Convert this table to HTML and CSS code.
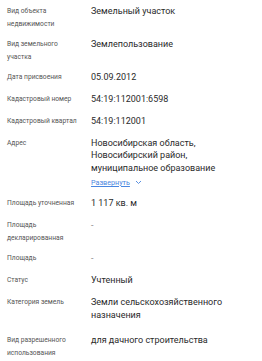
FILE: index.html
```html
<!DOCTYPE html>
<html lang="ru">
<head>
<meta charset="utf-8">
<link rel="stylesheet" href="styles.css">
</head>
<body>
<div class="list">
  <div class="row"><div class="label">Вид объекта<br>недвижимости</div><div class="value">Земельный участок</div></div>
  <div class="row"><div class="label">Вид земельного<br>участка</div><div class="value">Землепользование</div></div>
  <div class="row"><div class="label">Дата присвоения</div><div class="value">05.09.2012</div></div>
  <div class="row"><div class="label">Кадастровый номер</div><div class="value">54:19:112001:6598</div></div>
  <div class="row"><div class="label">Кадастровый квартал</div><div class="value">54:19:112001</div></div>
  <div class="row row-addr"><div class="label">Адрес</div><div class="value">Новосибирская область,<br>Новосибирский район,<br>муниципальное образование<div class="more"><span class="more-link">Развернуть</span><svg class="chev" width="7" height="5" viewBox="0 0 7 5"><path d="M1 1l2.5 2.5L6 1" fill="none" stroke="#5a90e0" stroke-width="1"/></svg></div></div></div>
  <div class="row"><div class="label">Площадь уточненная</div><div class="value">1 117 кв. м</div></div>
  <div class="row"><div class="label">Площадь<br>декларированная</div><div class="value dash">-</div></div>
  <div class="row"><div class="label">Площадь</div><div class="value dash">-</div></div>
  <div class="row"><div class="label">Статус</div><div class="value">Учтенный</div></div>
  <div class="row row-tall"><div class="label">Категория земель</div><div class="value">Земли сельскохозяйственного<br>назначения</div></div>
  <div class="row"><div class="label">Вид разрешенного<br>использования</div><div class="value">для дачного строительства</div></div>
</div>
</body>
</html>
```
FILE: styles.css
```css
html, body {
  margin: 0;
  padding: 0;
  background: #fff;
}
body {
  font-family: Roboto, "Liberation Sans", Arial, sans-serif;
  padding-top: 1px;
}
.list {
  display: flex;
  flex-direction: column;
}
.row {
  display: grid;
  grid-template-columns: 84px 1fr;
  padding: 3.5px 0 3.5px 7px;
}
.row-addr {
  padding-bottom: 4.5px;
}
.row-tall {
  padding-bottom: 9.5px;
}
.label {
  font-size: 6.7px;
  line-height: 13px;
  color: #555;
}
.value {
  font-size: 9px;
  line-height: 12.5px;
  min-height: 15px;
  color: #2a2a2a;
}
.dash {
  color: #888;
}
.more {
  display: flex;
  align-items: center;
  gap: 5px;
  margin-top: 2px;
  line-height: 13px;
}
.more-link {
  font-size: 7.2px;
  color: #4a86e0;
  text-decoration: underline;
}
.chev {
  display: block;
}
```
